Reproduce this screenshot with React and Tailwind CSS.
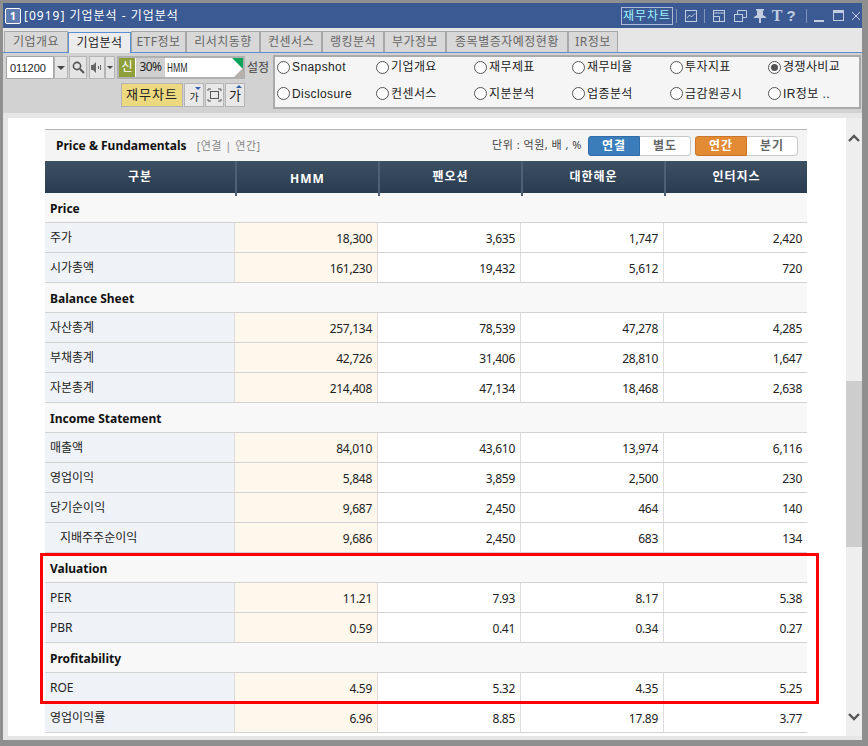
import React from 'react'

const kr = "font-['Noto_Sans','Noto_Sans_CJK_KR',sans-serif]"

const tabs = [
  ['기업개요', 'w-[64px]'],
  ['기업분석', 'w-[63px]'],
  ['ETF정보', 'w-[55px]'],
  ['리서치동향', 'w-[74px]'],
  ['컨센서스', 'w-[62px]'],
  ['랭킹분석', 'w-[62px]'],
  ['부가정보', 'w-[62px]'],
  ['종목별증자예정현황', 'w-[122px]'],
  ['IR정보', 'w-[50px]'],
]

const radios = [
  'Snapshot', '기업개요', '재무제표', '재무비율', '투자지표', '경쟁사비교',
  'Disclosure', '컨센서스', '지분분석', '업종분석', '금감원공시', 'IR정보 ..',
]

const rows = [
  { section: 'Price' },
  { label: '주가', values: ['18,300', '3,635', '1,747', '2,420'] },
  { label: '시가총액', values: ['161,230', '19,432', '5,612', '720'] },
  { section: 'Balance Sheet' },
  { label: '자산총계', values: ['257,134', '78,539', '47,278', '4,285'] },
  { label: '부채총계', values: ['42,726', '31,406', '28,810', '1,647'] },
  { label: '자본총계', values: ['214,408', '47,134', '18,468', '2,638'] },
  { section: 'Income Statement' },
  { label: '매출액', values: ['84,010', '43,610', '13,974', '6,116'] },
  { label: '영업이익', values: ['5,848', '3,859', '2,500', '230'] },
  { label: '당기순이익', values: ['9,687', '2,450', '464', '140'] },
  { label: '지배주주순이익', values: ['9,686', '2,450', '683', '134'], indent: true },
  { section: 'Valuation' },
  { label: 'PER', values: ['11.21', '7.93', '8.17', '5.38'] },
  { label: 'PBR', values: ['0.59', '0.41', '0.34', '0.27'] },
  { section: 'Profitability' },
  { label: 'ROE', values: ['4.59', '5.32', '4.35', '5.25'] },
  { label: '영업이익률', values: ['6.96', '8.85', '17.89', '3.77'] },
]

const cols = 'grid grid-cols-[190px_143px_143px_143px_143px]'

function TitleIcons() {
  return (
    <div className="flex items-center h-full text-[#c3cde0]">
      <div className="w-[52px] h-[18px] border border-[#aebbd6] text-[#9ff2ff] text-[12px] leading-[16px] text-center tracking-[1px]">재무차트</div>
      <div className="w-px h-[14px] bg-[#8393b6] ml-[3px]" />
      <svg width="14" height="14" viewBox="0 0 14 14" className="ml-[7px]" fill="none" stroke="currentColor">
        <rect x="1.5" y="1.5" width="11" height="11" />
        <path d="M3 9l2.5-3 2 2 3.5-3.5" />
      </svg>
      <div className="w-px h-[14px] bg-[#8393b6] ml-[6px]" />
      <svg width="14" height="14" viewBox="0 0 14 14" className="ml-[7px]" fill="none" stroke="currentColor">
        <rect x="1.5" y="1.5" width="11" height="11" />
        <path d="M1.5 7.5h6v5M1.5 4h11" />
      </svg>
      <svg width="15" height="14" viewBox="0 0 15 14" className="ml-[7px]" fill="none" stroke="currentColor">
        <rect x="1.5" y="5.5" width="8" height="7" />
        <path d="M4.5 5V1.5h9v7H10" />
      </svg>
      <svg width="14" height="15" viewBox="0 0 14 15" className="ml-[5px]" fill="currentColor">
        <path d="M3 1h8v1l-1 1v4l3 2v1H8v5H6v-5H1V9l3-2V3L3 2z" />
      </svg>
      <span className="ml-[4px] w-[12px] text-[16px] leading-none font-bold text-center font-['Liberation_Serif',serif]">T</span>
      <span className="ml-[3px] w-[10px] text-[15px] leading-none font-bold text-center font-['Liberation_Sans',sans-serif]">?</span>
      <div className="w-px h-[14px] bg-[#8393b6] ml-[10px]" />
      <div className="w-[10px] h-[2px] bg-[#c3cde0] ml-[7px] mt-[10px]" />
      <svg width="11" height="11" viewBox="0 0 11 11" className="ml-[9px]" fill="none" stroke="currentColor">
        <rect x="0.5" y="0.5" width="10" height="10" />
        <path d="M0 2h11" strokeWidth="2" />
      </svg>
      <svg width="10" height="10" viewBox="0 0 10 10" className="ml-[7px]" fill="none" stroke="currentColor">
        <path d="M1 1l8 8M9 1l-8 8" />
      </svg>
    </div>
  )
}

function Toolbar() {
  return (
    <div className="flex h-[60px] bg-[#d2d2d2] pl-[3px] pr-[1px]">
      <div className="w-[267px] shrink-0 pt-[3px]">
        <div className="flex h-[23px] items-stretch">
          <div className="w-[48px] bg-white border border-[#a5a5a5] text-[11px] leading-[22px] pl-[3px] text-[#222] font-['Liberation_Sans',sans-serif]">011200</div>
          <button className="w-[14px] bg-[#e4e4e4] border border-[#b5b5b5] flex items-center justify-center">
            <span className="w-0 h-0 border-x-[4px] border-x-transparent border-t-[4px] border-t-[#444]" />
          </button>
          <button className="w-[18px] ml-px bg-[#e4e4e4] border border-[#b5b5b5] flex items-center justify-center">
            <svg width="13" height="13" viewBox="0 0 13 13" fill="none" stroke="#555" strokeWidth="1.6">
              <circle cx="5" cy="5" r="3.6" />
              <path d="M8 8l4 4" strokeWidth="2" />
            </svg>
          </button>
          <button className="w-[16px] ml-[2px] bg-[#e4e4e4] border border-[#b5b5b5] flex items-center justify-center">
            <svg width="12" height="13" viewBox="0 0 12 13" fill="#666">
              <path d="M0 4h2l3-3v11L2 9H0zM7 5h1v3H7zM9 4h1v5H9z" />
            </svg>
          </button>
          <button className="w-[10px] bg-[#e4e4e4] border border-[#b5b5b5] flex items-center justify-center">
            <span className="w-0 h-0 border-x-[3px] border-x-transparent border-t-[3px] border-t-[#444]" />
          </button>
          <div className="relative w-[128px] ml-[2px] bg-white border-2 border-[#b0b0b0] flex items-stretch">
            <span className="w-[16px] bg-[#8fa03a] text-white text-[12px] leading-[18px] text-center">신</span>
            <span className="w-[29px] ml-px bg-[#d0d0d0] text-[12px] leading-[18px] text-center text-[#222] tracking-[-0.5px]">30%</span>
            <span className="ml-[2px] inline-block origin-left scale-x-[0.62] text-[13px] leading-[18px] text-[#222]">HMM</span>
            <span className="absolute right-0 top-0 w-0 h-0 border-l-[11px] border-l-transparent border-t-[11px] border-t-[#0ba35a]" />
            <span className="absolute right-0 bottom-0 w-0 h-0 border-l-[9px] border-l-transparent border-b-[9px] border-b-[#b5b0ab]" />
          </div>
          <span className="ml-[2px] text-[12px] leading-[24px] text-[#444]">설정</span>
        </div>
        <div className="flex items-stretch h-[24px] mt-[4px] pl-[115px]">
          <button className="w-[62px] bg-[#ecd97f] border border-[#b5b5b5] text-[13px] tracking-[1px] text-[#222]">재무차트</button>
          <button className="relative w-[20px] ml-px bg-[#e8e8e8] border border-[#b5b5b5] text-[10px] leading-[26px] text-[#222]">
            가
            <span className="absolute right-[2px] top-[3px] w-0 h-0 border-x-[3px] border-x-transparent border-t-[3px] border-t-[#2f5fa8]" />
          </button>
          <button className="w-[19px] ml-px bg-[#e8e8e8] border border-[#b5b5b5] flex items-center justify-center">
            <svg width="15" height="14" viewBox="0 0 15 14" fill="none" stroke="#555">
              <rect x="3.5" y="3.5" width="8" height="7" />
              <path d="M1 3V1h3M11 1h3v2M14 11v2h-3M4 13H1v-2" />
            </svg>
          </button>
          <button className="relative w-[20px] ml-px bg-[#e8e8e8] border border-[#b5b5b5] text-[13px] leading-[22px] text-[#222]">
            가
            <span className="absolute right-[2px] top-[1px] w-0 h-0 border-x-[3px] border-x-transparent border-b-[3px] border-b-[#2f5fa8]" />
          </button>
        </div>
      </div>
      <div className="flex-1 mt-[2px] h-[54px] bg-[#f5f5f5] border-2 border-[#aaaaaa] grid grid-cols-[99px_98px_98px_98px_98px_1fr] grid-rows-[20px_27px] gap-y-[3px] pl-[2px] text-[12px] tracking-[0.4px] text-[#222] font-['Liberation_Sans','Noto_Sans_CJK_KR',sans-serif]">
        {radios.map((r) => (
          <div key={r} className="flex items-center gap-[2px]">
            <span className="w-[13px] h-[13px] shrink-0 rounded-full border border-[#555] bg-white flex items-center justify-center">
              {r === '경쟁사비교' && <span className="w-[7px] h-[7px] rounded-full bg-[#555]" />}
            </span>
            <span>{r}</span>
          </div>
        ))}
      </div>
    </div>
  )
}

function Seg({ on, off, active }) {
  return (
    <div className="flex h-[20px] text-[12px] font-bold">
      <div className={`w-[52px] rounded-l-[3px] text-white text-center leading-[18px] tracking-[1px] border ${active}`}>{on}</div>
      <div className="w-[51px] rounded-r-[4px] bg-white border border-l-0 border-[#c8c8c8] text-[#666] text-center leading-[18px] tracking-[1px]">{off}</div>
    </div>
  )
}

function Row({ row }) {
  if (row.section) {
    return (
      <div className="h-[30px] overflow-hidden bg-[#f8f8f8] border-b border-[#d2d2d2] pl-[5px] text-[12px] font-bold leading-[32px] text-[#111]">
        {row.section}
      </div>
    )
  }
  return (
    <div className={`${cols} grid-rows-[29px] h-[30px] overflow-hidden border-b border-[#d2d2d2] text-[12px] text-[#222]`}>
      <div className={`bg-[#eff2f7] border-r border-[#dcdcdc] leading-[29px] ${row.indent ? 'pl-[15px]' : 'pl-[5px]'}`}>{row.label}</div>
      {row.values.map((v, i) => (
        <div key={i} className={`text-right pr-[5px] leading-[31px] tracking-[-0.3px] border-r border-[#dcdcdc] last:border-r-0 ${i === 0 ? 'bg-[#fef7ec]' : 'bg-white'}`}>{v}</div>
      ))}
    </div>
  )
}

export default function App() {
  return (
    <div className={`relative w-[868px] h-[746px] overflow-hidden bg-[#8f8f8f] pt-[3px] pl-[3px] pr-[6px] pb-[6px] ${kr}`}>
      <div className="h-full flex flex-col bg-[#e6e6e6]">
        <div className="h-[25px] shrink-0 bg-[#3b5a94] flex items-center justify-between pl-[2px] pr-[1px]">
          <div className="flex items-center text-white text-[12px] tracking-[1px]">
            <span className="w-[16px] h-[16px] mr-[3px] rounded-[2px] border border-white bg-[#5f7cb0] text-[11px] leading-[14px] font-bold text-center tracking-normal">1</span>
            [0919] 기업분석 - 기업분석
          </div>
          <TitleIcons />
        </div>

        <div className="h-[25px] shrink-0 flex items-end pl-[1px] border-b border-[#5b8fd0]">
          {tabs.map(([t, w]) => (
            <div
              key={t}
              className={`${w} h-[21px] text-[12px] tracking-[0.5px] leading-[20px] text-center border border-b-0 ${t === '기업분석' ? 'bg-[#ececec] border-[#5b8fd0] text-[#222] relative top-px' : 'bg-[#d8d8d8] border-[#a8a8a8] text-[#666]'}`}
            >
              {t}
            </div>
          ))}
        </div>

        <Toolbar />

        <div className="flex-1 min-h-0 flex mt-[5px] ml-[5px] mb-[4px]">
          <div className="w-[838px] bg-white pt-[11px] pl-[37px] overflow-hidden">
            <div className="w-[762px]">
              <div className="h-[32px] bg-[#f4f4f4] border-t border-[#b5b5b5] flex items-center justify-between pl-[11px] pr-[9px]">
                <div className="flex items-center pt-px">
                  <span className="text-[12px] font-bold text-[#111]">Price &amp; Fundamentals</span>
                  <span className="ml-[10px] text-[11px] tracking-[0.5px] text-[#888]">[연결 | 연간]</span>
                </div>
                <div className="flex items-center">
                  <span className="text-[11px] tracking-[0.5px] text-[#444] mr-[6px]">단위 : 억원, 배 , %</span>
                  <Seg on="연결" off="별도" active="bg-[#3b7dbb] border-[#2f6da8]" />
                  <div className="w-[4px]" />
                  <Seg on="연간" off="분기" active="bg-[#e38a35] border-[#c9752a]" />
                </div>
              </div>
              <div className={`${cols} h-[32px] bg-gradient-to-b from-[#3d4f63] to-[#2a3c50] text-white text-[12px] font-bold text-center leading-[31px] tracking-[1px]`}>
                <div>구분</div>
                <div className="border-l-2 border-[#4e6073] leading-[35px]">HMM</div>
                <div className="border-l-2 border-[#4e6073]">팬오션</div>
                <div className="border-l-2 border-[#4e6073]">대한해운</div>
                <div className="border-l-2 border-[#4e6073]">인터지스</div>
              </div>
              {rows.map((r, i) => (
                <Row key={i} row={r} />
              ))}
            </div>
          </div>
          <div className="w-[16px] bg-[#eeeeee] relative">
            <svg width="14" height="10" viewBox="0 0 14 10" className="absolute left-[1px] top-[15px]" fill="none" stroke="#555" strokeWidth="2.4">
              <path d="M2 8l5-5 5 5" />
            </svg>
            <div className="absolute left-0 top-[263px] w-[16px] h-[166px] bg-[#cdcdcd]" />
            <svg width="14" height="10" viewBox="0 0 14 10" className="absolute left-[1px] bottom-[14px]" fill="none" stroke="#555" strokeWidth="2.4">
              <path d="M2 2l5 5 5-5" />
            </svg>
          </div>
        </div>
      </div>
      <div className="absolute left-[40px] top-[553px] w-[779px] h-[151px] border-[3px] border-[#ff0000]" />
    </div>
  )
}
